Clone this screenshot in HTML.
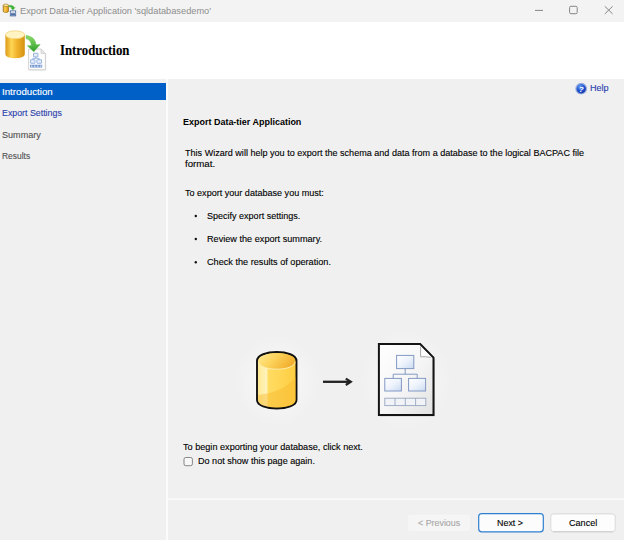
<!DOCTYPE html>
<html><head><meta charset="utf-8">
<style>
html,body{margin:0;padding:0;}
body{width:624px;height:540px;overflow:hidden;background:#f0f0f0;font-family:"Liberation Sans",sans-serif;font-size:10px;color:#000;position:relative;}
.abs{position:absolute;white-space:nowrap;}
#titlebar{left:0;top:0;width:624px;height:22px;background:#f3f3f3;}
#header{left:0;top:22px;width:624px;height:57px;background:#fff;}
#sep{left:166px;top:79px;width:2px;height:461px;background:#fbfbfb;}
#hsep{left:168px;top:498px;width:456px;height:2px;background:#f8f8f8;}
#sel{left:0;top:83px;width:166px;height:17px;background:#0060c8;}
.t{font-size:9.4px;line-height:12px;transform-origin:0 0;-webkit-text-stroke:0.12px currentColor;}
</style></head><body>
<div class="abs" id="titlebar"></div>
<div class="abs" id="header"></div>
<div class="abs" id="sep"></div>
<div class="abs" id="hsep"></div>
<div class="abs" id="sel"></div>
<svg class="abs" id="shapes" style="left:0;top:0" width="624" height="540" viewBox="0 0 624 540">
<defs>
<linearGradient id="gCylS" x1="0" x2="1" y1="0" y2="0"><stop offset="0" stop-color="#dc9a18"/><stop offset="0.32" stop-color="#ffd655"/><stop offset="0.6" stop-color="#f0b22a"/><stop offset="1" stop-color="#d49212"/></linearGradient>
<linearGradient id="gCylB" x1="0" x2="1" y1="0" y2="0"><stop offset="0" stop-color="#ffe88c"/><stop offset="0.24" stop-color="#fff3bd"/><stop offset="0.29" stop-color="#ffdc62"/><stop offset="1" stop-color="#ffcd42"/></linearGradient>
<linearGradient id="gCylT" x1="0" x2="1" y1="0" y2="0.4"><stop offset="0" stop-color="#ffeb95"/><stop offset="0.5" stop-color="#fcd25a"/><stop offset="1" stop-color="#f2b030"/></linearGradient>
<linearGradient id="gDoc" x1="0" x2="1" y1="0" y2="1"><stop offset="0" stop-color="#ffffff"/><stop offset="0.5" stop-color="#f6f6f6"/><stop offset="1" stop-color="#e2e2e2"/></linearGradient>
<linearGradient id="gBox" x1="0" x2="1" y1="0" y2="1"><stop offset="0" stop-color="#ffffff"/><stop offset="0.5" stop-color="#eef3fb"/><stop offset="1" stop-color="#c9daf2"/></linearGradient>
<linearGradient id="gGreen" x1="0" x2="0" y1="0" y2="1"><stop offset="0" stop-color="#8fdc6a"/><stop offset="1" stop-color="#2f9e2a"/></linearGradient>
<radialGradient id="gHelp" cx="0.4" cy="0.3" r="0.8"><stop offset="0" stop-color="#6aa0f0"/><stop offset="0.5" stop-color="#1c4fd0"/><stop offset="1" stop-color="#0a2a90"/></radialGradient>
<radialGradient id="gGlow" cx="0.5" cy="0.5" r="0.5"><stop offset="0" stop-color="#f7f7f7"/><stop offset="0.5" stop-color="#f5f5f5"/><stop offset="0.8" stop-color="#f2f2f2"/><stop offset="1" stop-color="#f0f0f0"/></radialGradient>
</defs>

<!-- window controls -->
<g stroke="#868686" stroke-width="1" fill="none">
<line x1="535" y1="10.4" x2="543" y2="10.4"/>
<rect x="569.6" y="6.3" width="7.6" height="7.4" rx="1.3"/>
<path d="M604.8 6.3 L612.6 13.9 M612.6 6.3 L604.8 13.9"/>
</g>

<!-- title bar small icon -->
<g id="ticon">
<path d="M3.2 5.3 V11.2 A2.65 1.2 0 0 0 8.5 11.2 V5.3 z" fill="url(#gCylS)" stroke="#8a5a0c" stroke-width="0.6"/>
<ellipse cx="5.85" cy="5.3" rx="2.65" ry="1.25" fill="#ffe9a0" stroke="#8a5a0c" stroke-width="0.5"/>
<path d="M8.8 5.2 H11.4 Q14 5.6 14.2 7.4 H15.4 L12.9 10.2 L10.4 7.4 H11.7 Q11.5 6.9 10.6 6.9 H8.8 z" fill="#3fae38" stroke="#7fd070" stroke-width="0.3"/>
<rect x="10.3" y="10.9" width="5.4" height="5" fill="#fff" stroke="#3d5f95" stroke-width="0.8"/>
<rect x="11" y="13.2" width="4" height="2.3" fill="#4d6fa5"/>
<rect x="11.4" y="11.6" width="3.2" height="1.4" fill="#c8d6ec"/>
</g>

<!-- header icon -->
<g id="hicon">
<path d="M5.4 34.8 V54.5 A9.7 3.8 0 0 0 24.8 54.5 V34.8 z" fill="url(#gCylS)"/>
<ellipse cx="15.1" cy="34.8" rx="9.7" ry="4" fill="#fff4c2" stroke="#f0c860" stroke-width="0.6"/>
<!-- doc -->
<path d="M29.4 50 H41.6 L46.2 54.4 V70.6 H29.4 z" fill="#cfcfcf" opacity="0.55"/>
<path d="M28.6 49 H41 L45.4 53.6 V69.8 H28.6 z" fill="#fdfdfd" stroke="#c8c8c8" stroke-width="0.8"/>
<path d="M41 49 V53.6 H45.4 z" fill="#e8e8e8" stroke="#c8c8c8" stroke-width="0.6"/>
<g fill="#e6eefa" stroke="#6c95d3" stroke-width="0.65">
<rect x="33.5" y="53.3" width="4.4" height="3.6" rx="0.4"/>
<rect x="30.6" y="59.7" width="4.4" height="3.6" rx="0.4"/>
<rect x="36.9" y="59.7" width="4.6" height="3.6" rx="0.4"/>
</g>
<path d="M35.7 57 V58.4 M32.8 59.7 V58.4 H39.2 V59.7" fill="none" stroke="#6c95d3" stroke-width="0.6"/>
<g fill="#dce7f7" stroke="#4a78c0" stroke-width="0.55">
<rect x="30.3" y="65.1" width="2.6" height="2"/><rect x="33.3" y="65.1" width="2.6" height="2"/><rect x="36.3" y="65.1" width="2.6" height="2"/><rect x="39.3" y="65.1" width="2.6" height="2"/>
</g>
<!-- green arrow -->
<path d="M26 35.6 C32 36 35.6 39.6 36 44.8 L40.2 44.4 L33.8 51.8 L27.4 45.8 L31.4 45.4 C31 41.6 29 39.4 26 38.6 z" fill="url(#gGreen)" stroke="#4fb53e" stroke-width="0.4"/>
</g>

<!-- help icon -->
<circle cx="581.2" cy="88.7" r="5.3" fill="url(#gHelp)" stroke="#9ab0de" stroke-width="1.2"/>
<text x="581.3" y="91.7" font-family="Liberation Sans, sans-serif" font-weight="bold" font-style="italic" font-size="8" fill="#fff" text-anchor="middle">?</text>

<!-- bullets -->
<g fill="#111">
<circle cx="195.8" cy="216" r="1.2"/>
<circle cx="195.8" cy="239" r="1.2"/>
<circle cx="195.8" cy="262.2" r="1.2"/>
</g>

<!-- checkbox -->
<rect x="184" y="457.5" width="8.4" height="8.2" rx="1.8" fill="#f8f8f8" stroke="#6a6a6a" stroke-width="0.8"/>

<!-- buttons -->
<rect x="407.4" y="514" width="63.4" height="17.6" rx="2.5" fill="#f5f5f5" stroke="#ededed" stroke-width="0.8"/>
<rect x="478.7" y="513.6" width="64.6" height="18.2" rx="3" fill="#fcfcfc" stroke="#2f7fd0" stroke-width="1.2"/>
<rect x="550.8" y="513.9" width="64.4" height="17.8" rx="2.8" fill="#fdfdfd" stroke="#d2d2d2" stroke-width="0.8"/>
<line x1="553" y1="531.8" x2="613" y2="531.8" stroke="#bdbdbd" stroke-width="0.6"/>

<!-- illustration -->
<ellipse cx="277" cy="381" rx="42" ry="46" fill="url(#gGlow)"/>
<ellipse cx="406" cy="380" rx="46" ry="50" fill="url(#gGlow)"/>
<g id="bigcyl">
<path d="M257 361 V400 C257 411.4 296.5 411.4 296.5 400 V361 C296.5 349 257 349 257 361 z" fill="url(#gCylB)" stroke="#fafafa" stroke-width="3.4" opacity="0.9"/>
<path d="M257 361 V400 C257 411.4 296.5 411.4 296.5 400 V361 C296.5 349 257 349 257 361 z" fill="url(#gCylB)" stroke="#111" stroke-width="1.9"/>
<path d="M258 395 Q284 392 295.6 377 V400 C295.6 410 258 410 258 400 z" fill="#f7b92f" opacity="0.45"/>
<path d="M258.4 361.2 C258.4 350.6 295.1 350.6 295.1 361.2 C295.1 371.8 258.4 371.8 258.4 361.2 z" fill="url(#gCylT)"/>
<path d="M258.4 362 C259.4 371.6 294.1 371.6 295.1 362" fill="none" stroke="#fff1b8" stroke-width="1" opacity="0.9"/>
</g>
<!-- arrow -->
<path d="M323 381.8 H350" stroke="#222" stroke-width="2.3" fill="none"/>
<path d="M345.8 378.6 L350.8 381.8 L345.8 385" stroke="#222" stroke-width="2.2" fill="none" stroke-linejoin="miter"/>
<!-- big doc -->
<g id="bigdoc">
<path d="M379.8 345.4 H421 L435 359.6 V416.6 H379.8 z" fill="#b4b4b4" opacity="0.55"/>
<path d="M378.9 344 H420.2 L433.5 357.6 V415 H378.9 z" fill="url(#gDoc)" stroke="#141414" stroke-width="2" stroke-linejoin="miter"/>
<path d="M420.4 346 V356.6 Q426 356.2 431.4 357.6 z" fill="#fdfdfd"/>
<path d="M420.6 346.6 V356.8 Q426 356.4 430.6 357.4" fill="none" stroke="#a9a9a9" stroke-width="1"/>
<g fill="url(#gBox)" stroke="#8398c4" stroke-width="1">
<rect x="396.6" y="355.4" width="17.2" height="13.2"/>
<rect x="384.8" y="378.4" width="16.6" height="12.6"/>
<rect x="408.6" y="378.4" width="17" height="12.6"/>
</g>
<path d="M405.2 368.6 V374.2 M393.2 378.4 V374.2 H417.2 V378.4" fill="none" stroke="#8398c4" stroke-width="1"/>
<g fill="#f1f3f7" stroke="#98a6c2" stroke-width="0.9">
<rect x="384.8" y="398.2" width="41" height="7.4"/>
<path d="M395 398.2 V405.6 M405.3 398.2 V405.6 M415.6 398.2 V405.6" fill="none"/>
</g>
</g>
</svg>

<div class="abs t" id="wtitle" style="left:19.80px;top:4.74px;color:#8e8e8e;-webkit-text-stroke:0;transform:scaleX(0.9856);">Export Data-tier Application 'sqldatabasedemo'</div>
<div class="abs t" id="htitle" style="left:59.60px;top:45.04px;color:#000;font-family:'Liberation Serif',serif;font-weight:bold;font-size:13.8px;transform:scaleX(0.9266);">Introduction</div>
<div class="abs t" id="s1" style="left:1.80px;top:85.74px;color:#fff;transform:scaleX(1.0347);">Introduction</div>
<div class="abs t" id="s2" style="left:2.00px;top:107.44px;color:#2a3fae;transform:scaleX(0.9406);">Export Settings</div>
<div class="abs t" id="s3" style="left:2.00px;top:128.74px;color:#505050;transform:scaleX(0.9675);">Summary</div>
<div class="abs t" id="s4" style="left:2.00px;top:149.94px;color:#505050;transform:scaleX(0.9000);">Results</div>
<div class="abs t" id="help" style="left:590.20px;top:82.34px;color:#2a3fae;transform:scaleX(0.9684);">Help</div>
<div class="abs t" id="c1" style="left:183.00px;top:115.74px;color:#000;font-weight:bold;-webkit-text-stroke:0;transform:scaleX(0.9573);">Export Data-tier Application</div>
<div class="abs t" id="c2" style="left:185.30px;top:146.74px;color:#000;transform:scaleX(0.9661);">This Wizard will help you to export the schema and data from a database to the logical BACPAC file</div>
<div class="abs t" id="c2b" style="left:185.00px;top:157.74px;color:#000;transform:scaleX(1.0310);">format.</div>
<div class="abs t" id="c3" style="left:185.00px;top:187.14px;color:#000;transform:scaleX(0.9653);">To export your database you must:</div>
<div class="abs t" id="b1" style="left:207.00px;top:209.74px;color:#000;transform:scaleX(0.9619);">Specify export settings.</div>
<div class="abs t" id="b2" style="left:207.00px;top:232.74px;color:#000;transform:scaleX(0.9746);">Review the export summary.</div>
<div class="abs t" id="b3" style="left:207.00px;top:255.94px;color:#000;transform:scaleX(0.9748);">Check the results of operation.</div>
<div class="abs t" id="c4" style="left:182.90px;top:440.94px;color:#000;transform:scaleX(0.9724);">To begin exporting your database, click next.</div>
<div class="abs t" id="c5" style="left:198.00px;top:455.44px;color:#000;transform:scaleX(0.9669);">Do not show this page again.</div>
<div class="abs t" id="bp" style="left:417.90px;top:516.74px;color:#a8a8a8;transform:scaleX(0.9467);">&lt; Previous</div>
<div class="abs t" id="bn" style="left:497.10px;top:516.94px;color:#000;transform:scaleX(0.9510);">Next &gt;</div>
<div class="abs t" id="bc" style="left:568.70px;top:516.94px;color:#000;transform:scaleX(0.9690);">Cancel</div>
</body></html>
